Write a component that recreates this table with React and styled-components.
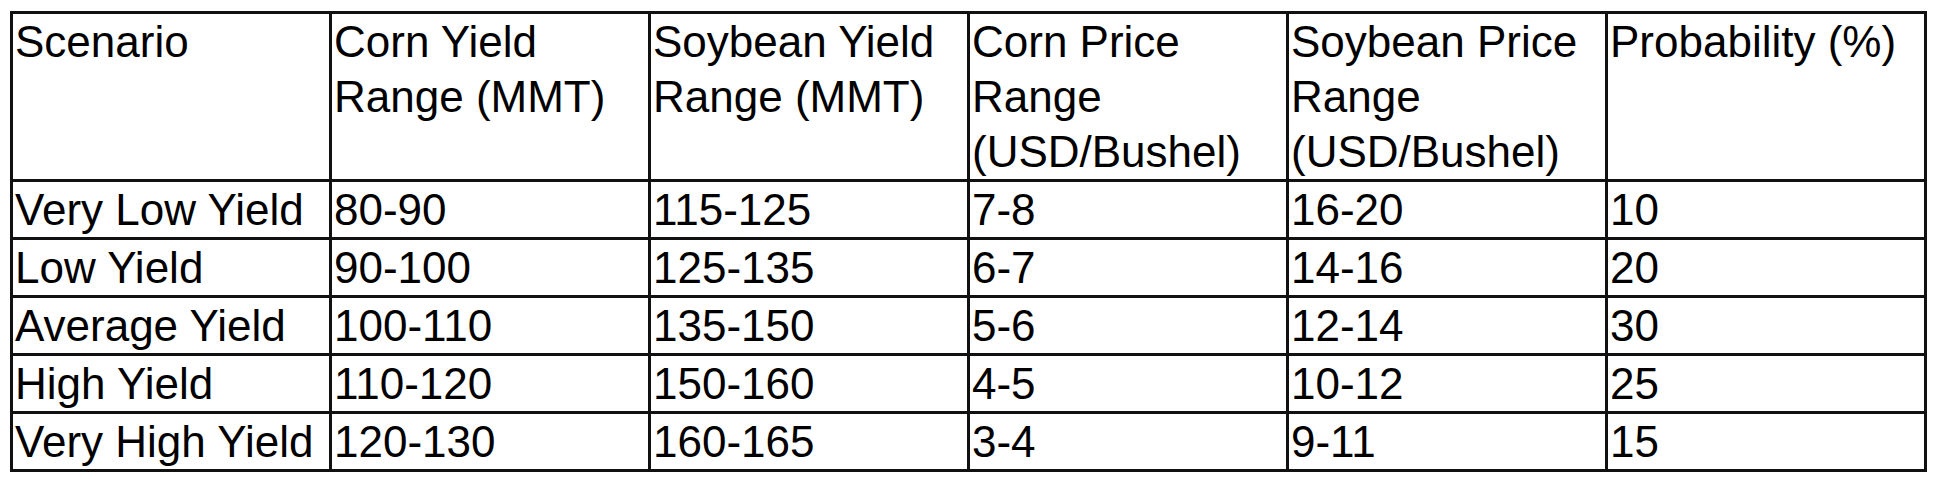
import styled, { createGlobalStyle } from "styled-components";

const COLUMNS = [
  "Scenario",
  "Corn Yield Range (MMT)",
  "Soybean Yield Range (MMT)",
  "Corn Price Range (USD/Bushel)",
  "Soybean Price Range (USD/Bushel)",
  "Probability (%)",
];

const ROWS = [
  ["Very Low Yield", "80-90", "115-125", "7-8", "16-20", "10"],
  ["Low Yield", "90-100", "125-135", "6-7", "14-16", "20"],
  ["Average Yield", "100-110", "135-150", "5-6", "12-14", "30"],
  ["High Yield", "110-120", "150-160", "4-5", "10-12", "25"],
  ["Very High Yield", "120-130", "160-165", "3-4", "9-11", "15"],
];

const GlobalStyle = createGlobalStyle`
  body {
    margin: 0;
    background: #ffffff;
    font-family: "Liberation Sans", Arial, sans-serif;
  }
`;

export default function App() {
  return (
    <>
      <GlobalStyle />
      <Wrap>
        <Table>
          <colgroup>
            {COLUMNS.map((c) => (
              <Col key={c} />
            ))}
          </colgroup>
          <thead>
            <tr>
              {COLUMNS.map((c) => (
                <HeadCell key={c}>{c}</HeadCell>
              ))}
            </tr>
          </thead>
          <tbody>
            {ROWS.map((r) => (
              <tr key={r[0]}>
                {r.map((v, i) => (
                  <Cell key={i}>{v}</Cell>
                ))}
              </tr>
            ))}
          </tbody>
        </Table>
      </Wrap>
    </>
  );
}

const Wrap = styled.div`
  padding: 11px 0 0 10px;
`;

const Table = styled.table`
  border-collapse: collapse;
  table-layout: fixed;
  width: 1917px;
  border: 3px solid #111;
  color: #000;
  font-size: 44px;
  line-height: 55px;
`;

const Col = styled.col`
  width: 319px;
`;

const HeadCell = styled.th`
  border: 3px solid #111;
  padding: 0 2px;
  text-align: left;
  vertical-align: top;
  font-weight: 400;
`;

const Cell = styled.td`
  border: 3px solid #111;
  padding: 0 2px;
  text-align: left;
  vertical-align: top;
  white-space: nowrap;
`;
